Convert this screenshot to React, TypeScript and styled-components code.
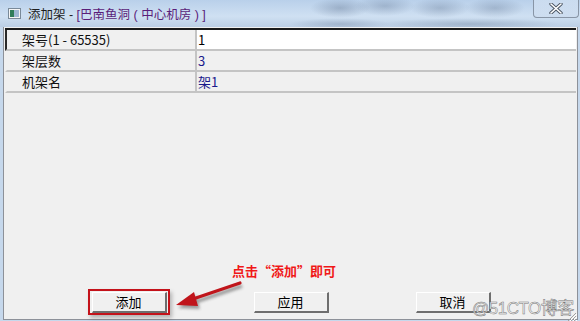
import React from 'react'
import styled, { createGlobalStyle } from 'styled-components'

const GlobalStyle = createGlobalStyle`
    html, body {
        margin: 0;
        padding: 0;
        background: #f0f0f0;
    }
    body {
        font-family: "Liberation Sans", "Noto Sans CJK SC", sans-serif;
    }
`

const rows = [
    { label: '架号(1 - 65535)', value: '1', editing: true },
    { label: '架层数', value: '3', editing: false },
    { label: '机架名', value: '架1', editing: false },
]

const App = () => {
    return (
        <Window>
            <GlobalStyle />
            <TitleBar>
                <AppIcon>
                    <svg width="13" height="11" viewBox="0 0 13 11">
                        <rect x="0.5" y="0.5" width="12" height="10" fill="#f4f4f4" stroke="#7a8a99" />
                        <rect x="2" y="2" width="4" height="7" fill="#2f7d5a" />
                        <rect x="6" y="2" width="5" height="7" fill="#9db7d2" />
                    </svg>
                </AppIcon>
                <Title>添加架 - <Highlight>[巴南鱼洞 ( 中心机房 ) ]</Highlight></Title>
                <CloseButton>
                    <svg width="14" height="11" viewBox="0 0 14 11">
                        <path d="M2 1 L12 10 M12 1 L2 10" stroke="#4a5563" strokeWidth="3.4" strokeLinecap="round" />
                        <path d="M2 1 L12 10 M12 1 L2 10" stroke="#ffffff" strokeWidth="1.6" strokeLinecap="round" />
                    </svg>
                </CloseButton>
            </TitleBar>
            <Body>
                <Grid>
                    {rows.map((row, i) => (
                        <React.Fragment key={row.label}>
                            <LabelCell $first={i === 0}>{row.label}</LabelCell>
                            <ValueCell $editing={row.editing}>{row.value}</ValueCell>
                        </React.Fragment>
                    ))}
                </Grid>
                <Spacer />
                <Footer>
                    <ButtonSlot $marked>
                        <Button>添加</Button>
                    </ButtonSlot>
                    <ButtonSlot>
                        <Button>应用</Button>
                    </ButtonSlot>
                    <ButtonSlot>
                        <Button>取消</Button>
                    </ButtonSlot>
                </Footer>
                <Grip>
                    <svg width="11" height="11" viewBox="0 0 11 11">
                        <path d="M10 2 L2 10 M10 5 L5 10 M10 8 L8 10" stroke="#a0a0a0" strokeWidth="1" />
                        <path d="M11 3 L3 11 M11 6 L6 11 M11 9 L9 11" stroke="#ffffff" strokeWidth="1" />
                    </svg>
                </Grip>
            </Body>
            <Note>点击“添加”即可</Note>
            <Arrow width="90" height="40" viewBox="0 0 90 40">
                <defs>
                    <filter id="sh" x="-20%" y="-40%" width="140%" height="180%">
                        <feGaussianBlur stdDeviation="1.6" />
                    </filter>
                </defs>
                <g transform="translate(2,3)" opacity="0.45" filter="url(#sh)">
                    <path d="M68 3 L18 20" stroke="#333" strokeWidth="3.5" />
                    <path d="M4 25 L22 12 L26 26 Z" fill="#333" />
                </g>
                <path d="M68 3 L18 20" stroke="#c0151b" strokeWidth="3.2" strokeLinecap="round" />
                <path d="M4 25 L22 12 L26 26 Z" fill="#c0151b" />
            </Arrow>
            <Watermark>@51CTO博客</Watermark>
        </Window>
    )
}

export default App

const Window = styled.div`
    position: relative;
    width: 580px;
    height: 321px;
    display: flex;
    flex-direction: column;
    overflow: hidden;
    background: #c6d8ec;
`

const TitleBar = styled.div`
    height: 27px;
    display: flex;
    align-items: center;
    padding-left: 6px;
    background:
        radial-gradient(ellipse 30px 10px at 340px 8px, rgba(80, 100, 130, 0.35), transparent),
        radial-gradient(ellipse 30px 10px at 385px 6px, rgba(80, 100, 130, 0.3), transparent),
        radial-gradient(ellipse 30px 10px at 440px 8px, rgba(80, 100, 130, 0.3), transparent),
        radial-gradient(ellipse 30px 10px at 495px 8px, rgba(80, 100, 130, 0.3), transparent),
        radial-gradient(ellipse 50px 6px at 340px 24px, rgba(90, 110, 140, 0.3), transparent),
        radial-gradient(ellipse 90px 6px at 470px 24px, rgba(90, 110, 140, 0.3), transparent),
        linear-gradient(180deg, #b9d0ea 0%, #cfe0f2 60%, #bccfe5 100%);
`

const AppIcon = styled.div`
    width: 16px;
    height: 16px;
    display: flex;
    align-items: center;
    justify-content: center;
    margin-right: 6px;
`

const Title = styled.div`
    font-size: 12.5px;
    color: #1e1e1e;
    white-space: nowrap;
    flex: 1;
`

const Highlight = styled.span`
    color: #5a1e7a;
`

const CloseButton = styled.div`
    align-self: flex-start;
    width: 44px;
    height: 17px;
    margin-right: 1px;
    border: 1px solid #8895a6;
    border-top: none;
    border-radius: 0 0 4px 4px;
    background: linear-gradient(180deg, rgba(255, 255, 255, 0.25), rgba(200, 215, 235, 0.4));
    display: flex;
    align-items: center;
    justify-content: center;
`

const Body = styled.div`
    position: relative;
    flex: 1;
    display: flex;
    flex-direction: column;
    margin: 0 2px 1px 3px;
    background: #f0f0f0;
    border-left: 1px solid #8d9199;
    border-right: 1px solid #8d9199;
    border-bottom: 1px solid #8d9199;
`

const Grid = styled.div`
    display: grid;
    grid-template-columns: 192px 1fr;
    margin: 1px 1px 0 1px;
    border-top: 2px solid #1a1a1a;
    font-family: "Noto Sans CJK SC", "Liberation Sans", sans-serif;
    font-size: 13px;
`

const LabelCell = styled.div<{ $first: boolean }>`
    height: 19px;
    line-height: 19px;
    padding-left: 15px;
    border-left: 2px solid ${p => (p.$first ? '#2a2a2a' : 'transparent')};
    border-bottom: 2px solid #c4c4c4;
    border-right: 2px solid #c4c4c4;
    color: #111;
    white-space: nowrap;
`

const ValueCell = styled.div<{ $editing: boolean }>`
    height: 19px;
    line-height: 19px;
    padding-left: 1px;
    border-bottom: 2px solid #c4c4c4;
    background: ${p => (p.$editing ? '#ffffff' : 'transparent')};
    color: ${p => (p.$editing ? '#000000' : '#1a1a8c')};
`

const Spacer = styled.div`
    flex: 1;
`

const Footer = styled.div`
    display: grid;
    grid-template-columns: repeat(3, 162px);
    padding: 0 0 4px 84px;
`

const ButtonSlot = styled.div<{ $marked?: boolean }>`
    width: 82px;
    height: 26px;
    display: flex;
    align-items: center;
    justify-content: center;
    box-sizing: border-box;
    border: 2px solid ${p => (p.$marked ? '#c4121a' : 'transparent')};
    box-shadow: ${p => (p.$marked ? '2px 3px 4px rgba(0,0,0,0.25)' : 'none')};
`

const Button = styled.div`
    width: 75px;
    height: 21px;
    box-sizing: border-box;
    display: flex;
    align-items: center;
    justify-content: center;
    background: #f0f0f0;
    border-top: 1px solid #ffffff;
    border-left: 1px solid #ffffff;
    border-right: 2px solid #6e6e6e;
    border-bottom: 2px solid #6e6e6e;
    font-family: "Noto Sans CJK SC", sans-serif;
    font-size: 13px;
    color: #000;
`

const Grip = styled.div`
    position: absolute;
    right: 0;
    bottom: 0;
    width: 11px;
    height: 11px;
`

const Note = styled.div`
    position: absolute;
    left: 232px;
    top: 261px;
    font-family: "Noto Sans CJK SC", sans-serif;
    font-weight: 700;
    font-size: 13px;
    color: #f01818;
    white-space: nowrap;
`

const Arrow = styled.svg`
    position: absolute;
    left: 172px;
    top: 280px;
`

const Watermark = styled.div`
    position: absolute;
    left: 472px;
    top: 294px;
    font-family: "Liberation Sans", "Noto Sans CJK SC", sans-serif;
    font-size: 17px;
    color: #f6f6f6;
    letter-spacing: -0.5px;
    -webkit-text-stroke: 0.5px #777777;
    white-space: nowrap;
`
